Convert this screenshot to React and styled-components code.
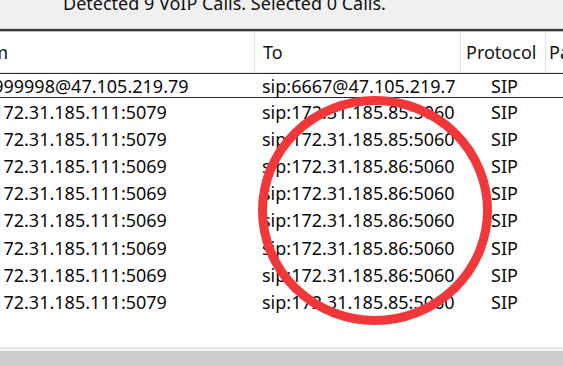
import React from 'react';
import styled, { createGlobalStyle } from 'styled-components';

const GlobalStyle = createGlobalStyle`
  html, body {
    margin: 0;
    padding: 0;
    background: #ffffff;
    overflow: hidden;
  }
  body {
    font-family: "Noto Sans", "Open Sans", sans-serif;
  }
`;

// 컬럼 정의: From 컬럼은 왼쪽으로 스크롤되어 일부만 보인다
const columns = [
  { key: 'from', title: 'From', width: 298, pad: 7 },
  { key: 'to', title: 'To', width: 206, pad: 8 },
  { key: 'protocol', title: 'Protocol', width: 85, pad: 5, center: true },
  { key: 'pa', title: 'Packets', width: 120, pad: 3 },
];

const calls = [
  { from: 'sip:999998@47.105.219.79', to: 'sip:6667@47.105.219.79', protocol: 'SIP' },
  { from: 'sip:172.31.185.111:5079', to: 'sip:172.31.185.85:5060', protocol: 'SIP' },
  { from: 'sip:172.31.185.111:5079', to: 'sip:172.31.185.85:5060', protocol: 'SIP' },
  { from: 'sip:172.31.185.111:5069', to: 'sip:172.31.185.86:5060', protocol: 'SIP' },
  { from: 'sip:172.31.185.111:5069', to: 'sip:172.31.185.86:5060', protocol: 'SIP' },
  { from: 'sip:172.31.185.111:5069', to: 'sip:172.31.185.86:5060', protocol: 'SIP' },
  { from: 'sip:172.31.185.111:5069', to: 'sip:172.31.185.86:5060', protocol: 'SIP' },
  { from: 'sip:172.31.185.111:5069', to: 'sip:172.31.185.86:5060', protocol: 'SIP' },
  { from: 'sip:172.31.185.111:5079', to: 'sip:172.31.185.85:5060', protocol: 'SIP' },
];

const template = columns.map(c => `${c.width}px`).join(' ');

function App() {
  const scrollX = 43; // 가로 스크롤 위치

  return (
    <Window>
      <GlobalStyle />
      <StatusBar>
        <StatusText>Detected 9 VoIP Calls. Selected 0 Calls.</StatusText>
      </StatusBar>
      <Rule />
      <ListView>
        <Header $template={template} $scroll={scrollX}>
          {columns.map(c => (
            <HeaderCell key={c.key} $pad={c.pad}>{c.title}</HeaderCell>
          ))}
        </Header>
        {calls.map((call, i) => (
          <Row key={i} $template={template} $scroll={scrollX} $focused={i === 0}>
            {columns.map(c => (
              <Cell key={c.key} $center={c.center}>
                <CellText>{call[c.key] || ''}</CellText>
              </Cell>
            ))}
          </Row>
        ))}
        <Filler />
      </ListView>
      <ScrollTrack>
        <ScrollThumb />
      </ScrollTrack>

      {/* 빨간 동그라미 표시 */}
      <Mark viewBox="0 0 563 366" width="563" height="366">
        <ellipse cx="375" cy="210.5" rx="112.5" ry="110" fill="none" stroke="#f2373a" strokeWidth="9" />
      </Mark>
    </Window>
  );
}

const Window = styled.div`
  position: relative;
  width: 563px;
  height: 366px;
  display: flex;
  flex-direction: column;
  background: #ffffff;
  overflow: hidden;
`;

const StatusBar = styled.div`
  height: 28px;
  flex: none;
  display: flex;
  align-items: flex-start;
  padding-left: 63px;
  background: #f0f0f0;
  border-bottom: 1px solid #d4d4d4;
  overflow: hidden;
`;

const StatusText = styled.span`
  margin-top: -6px;
  font-size: 18px;
  line-height: 18px;
  color: #111111;
  white-space: nowrap;
`;

const Rule = styled.div`
  height: 2px;
  flex: none;
  background: #3c3c3c;
`;

const ListView = styled.div`
  flex: 1;
  display: flex;
  flex-direction: column;
  overflow: hidden;
  background: #ffffff;
`;

const Header = styled.div`
  display: grid;
  grid-template-columns: ${props => props.$template};
  margin-left: -${props => props.$scroll}px;
  flex: none;
  box-sizing: border-box;
  height: 42px;
  border-top: 1px solid #b8b8b8;
  border-bottom: 1px solid #e3e3e3;
`;

const HeaderCell = styled.div`
  display: flex;
  align-items: center;
  padding: 0 4px 0 ${props => props.$pad}px;
  border-right: 1px solid #e3e3e3;
  font-size: 18px;
  color: #141414;
  white-space: nowrap;
  overflow: hidden;
`;

const Row = styled.div`
  display: grid;
  grid-template-columns: ${props => props.$template};
  margin-left: -${props => props.$scroll}px;
  flex: none;
  box-sizing: border-box;
  height: ${props => (props.$focused ? '25px' : '27.2px')};
  border-top: ${props => (props.$focused ? '1px solid #2a2a2a' : 'none')};
  border-bottom: ${props => (props.$focused ? '1px solid #2a2a2a' : 'none')};
`;

const Cell = styled.div`
  display: flex;
  align-items: center;
  justify-content: ${props => (props.$center ? 'center' : 'flex-start')};
  padding: 0 5px 0 7px;
  min-width: 0;
  font-size: 18px;
  color: #0a0a0a;
`;

const CellText = styled.span`
  display: block;
  white-space: nowrap;
  overflow: hidden;
`;

const Filler = styled.div`
  flex: 1;
`;

const ScrollTrack = styled.div`
  height: 19px;
  flex: none;
  box-sizing: border-box;
  border-top: 2px solid #e8e8e8;
  padding-top: 2px;
  background: #f7f7f7;
`;

const ScrollThumb = styled.div`
  height: 15px;
  background: #cdcdcd;
`;

const Mark = styled.svg`
  position: absolute;
  left: 0;
  top: 0;
  pointer-events: none;
`;

export default App;
